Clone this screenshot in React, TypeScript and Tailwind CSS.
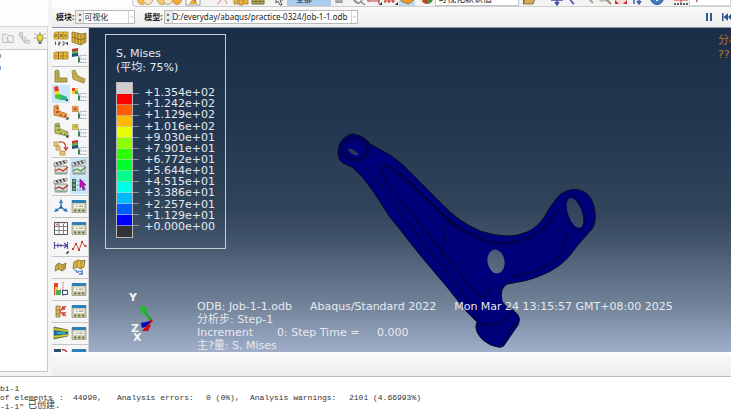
import React from 'react';
import type { ReactNode } from 'react';
import { ChevronDown } from 'lucide-react';
import clsx from 'clsx';

interface Tool {
  name: string;
  icon: ReactNode;
  active?: boolean;
}

const legendColors = [
  'bg-[#cfcdce]', 'bg-[#fb0000]', 'bg-[#ff5d00]', 'bg-[#ffb900]', 'bg-[#e8ff00]',
  'bg-[#8bff00]', 'bg-[#2eff00]', 'bg-[#00ff2e]', 'bg-[#00ff8b]', 'bg-[#00ffe8]',
  'bg-[#00b9ff]', 'bg-[#005dff]', 'bg-[#0000ff]', 'bg-[#333335]'
];

const legendValues = [
  '+1.354e+02', '+1.242e+02', '+1.129e+02', '+1.016e+02', '+9.030e+01', '+7.901e+01', '+6.772e+01',
  '+5.644e+01', '+4.515e+01', '+3.386e+01', '+2.257e+01', '+1.129e+01', '+0.000e+00'
];

function Svg({ children, className = 'w-4 h-4' }: { children: ReactNode; className?: string }) {
  return (
    <svg viewBox="0 0 16 16" fill="none" className={clsx('shrink-0', className)} aria-hidden="true">
      {children}
    </svg>
  );
}

const blocks = (
  <Svg>
    <path d="M1 3l2-1h12v7H1z" fill="#ecc03f" stroke="#b08c2c" strokeWidth=".8" />
    <path d="M5.500 2v7M10 2v7" stroke="#8f7327" strokeWidth=".8" />
    <path d="M2 7l1-3 1 3M7 7l1-3 1 3M11.500 7l1-3 1 3" stroke="#7d6526" strokeWidth=".9" />
    <path d="M2.500 11.500v3.500M5.500 12h1.500v1.500H5.500V15H7M9.500 12H11v3H9.500M13 12v1.500h2M14.500 12v3" stroke="#444" strokeWidth=".9" />
  </Svg>
);

const blocksTilted = (
  <Svg>
    <path d="M1 2l10 2 4-1v9l-5 3-9-3z" fill="#dfb53d" stroke="#8c7127" strokeWidth=".8" />
    <path d="M1 7l9 3 5-2M4 3v9M7 3v11M10 4v11M13 3v10" stroke="#7d6526" strokeWidth=".8" />
  </Svg>
);

const blocksFlat = (
  <Svg>
    <path d="M1 5l2-1h12v7H1z" fill="#eeb634" stroke="#a57c22" strokeWidth=".8" />
    <path d="M5.500 4v7M10 4v7M2 8h2M7 8h2M12 8h2" stroke="#8a6a22" strokeWidth="1" />
  </Svg>
);

const tree = (
  <>
    <path d="M7.500 7v8M7.500 9h2M7.500 14h2" stroke="#7d9a83" strokeWidth="1" />
    <path d="M9.500 7.500h6M9.500 11h6M9.500 14.500h6" stroke="#7ba3d0" strokeWidth="1.200" strokeDasharray="1.500 .8" />
    <path d="M7 10h2v4H7z" fill="#3f7d53" />
  </>
);

const contourOptions = (
  <Svg>
    <path d="M1 1l6-1v7l-6 1z" fill="#cf2f2b" />
    <path d="M1 3.500l6-1v4.500l-6 1z" fill="#57b34a" />
    <path d="M1 6l6-1v3l-6 1z" fill="#234f8f" />
    {tree}
  </Svg>
);

const cubeOptions = (
  <Svg>
    <path d="M1 2h6v6H1z" fill="#ecd43c" />
    <path d="M1 2h3v3H1z" fill="#e2442b" />
    <path d="M4 5h3v3H4z" fill="#4cb64e" />
    {tree}
  </Svg>
);

const orangeOptions = (
  <Svg>
    <path d="M1.500 2.500h5.500v5H1.500z" fill="#f0a23a" stroke="#c9803f" strokeWidth=".8" />
    <path d="M3 4h2.500v2H3z" fill="#d53c20" />
    {tree}
  </Svg>
);

const yellowOptions = (
  <Svg>
    <path d="M1.500 2.500h5.500v5H1.500z" fill="#e7cb52" stroke="#bba14a" strokeWidth=".8" />
    <path d="M3 5l2-2 1 3z" fill="#71a553" />
    {tree}
  </Svg>
);

const lShape = (
  <Svg>
    <path d="M2 3l2-1 2 1v7h8v4H2z" fill="#c2b04f" stroke="#8f8140" strokeWidth=".9" />
    <path d="M2 6h4M2 9h4M5 10v4M8 10v4M11 10v4" stroke="#94843a" strokeWidth=".6" />
  </Svg>
);

const lBent = (
  <Svg>
    <path d="M1 3l3-1 2 5 3 2 5 2-1 4-6-2-5-2z" fill="#c9b453" stroke="#988844" strokeWidth=".9" />
    <path d="M2 6l4-1M4 9l3-1M8 9l-1 4M11 10l-1 4" stroke="#94843a" strokeWidth=".6" />
  </Svg>
);

const contourPlot = (
  <Svg>
    <path d="M1 1l4-1 1 6-4 2z" fill="#e8321f" />
    <path d="M1.500 5h4.500v4l-4 2z" fill="#f3d62b" />
    <path d="M2 9l5-1 3 2-2 4-6-2z" fill="#3ec43e" />
    <path d="M9 9l5 2v3l-6 0z" fill="#2fae8a" />
    <path d="M12 15h3v-2z" fill="#222" />
  </Svg>
);

const symbolPlot = (
  <Svg>
    <path d="M1 2l4-1 1 6 8 3-1 4-8-2-4-1z" fill="#e2a047" stroke="#b4793c" strokeWidth=".9" />
    <path d="M3 4h2M3 8h3M7 11h2M11 12h2" stroke="#c8341f" strokeWidth="1.600" />
    <path d="M12.500 15.500h3v-3z" fill="#222" />
  </Svg>
);

const materialPlot = (
  <Svg>
    <path d="M2 2l4-1 1 6 8 3-1 4-8-2-4-1z" fill="#cdc15a" stroke="#7e8748" strokeWidth=".9" />
    <path d="M3 4h3M4 8h3M7 11h2M11 12h2" stroke="#3f9a5a" strokeWidth="1.600" />
    <path d="M12.500 15.500h3v-3z" fill="#222" />
  </Svg>
);

const transformBlocks = (
  <Svg>
    <path d="M1 2h4v4H1zM3 6h4v4H3zM7 11h5v4H7z" fill="#efc66a" stroke="#b79650" strokeWidth=".9" />
    <path d="M6 2c5-1 7 2 7 7M11 7l2 3 2-3" stroke="#c93c33" strokeWidth="1.300" />
  </Svg>
);

function Clapper({ stroke }: { stroke: string }) {
  return (
    <Svg>
      <path d="M1 4l13-3v3L1 7z" fill="#e8e8e8" stroke="#777" strokeWidth=".7" />
      <path d="M3 3.500l2 2M6.500 2.800l2 2M10 2l2 2" stroke="#333" strokeWidth="1.400" />
      <path d="M2 7h12v8H2z" fill="#dde1dc" stroke="#888" strokeWidth=".9" />
      <path d="M2 12l4-2 4 2 5-4" stroke={stroke} strokeWidth="1.300" />
      <path d="M3 14h10" stroke="#6a9a6e" strokeWidth="1" />
    </Svg>
  );
}

const clapperOptions = (
  <Svg>
    <path d="M1 2h4v12H1z" fill="#3f6b4a" />
    <path d="M2 4h2M2 8h2M2 12h2" stroke="#d3e1d3" strokeWidth="1.200" />
    <path d="M6 4h8M6 8h8M6 13h9" stroke="#5f8fc4" strokeWidth="1.200" strokeDasharray="1.500 .8" />
    <path d="M9 2l6 6-2.500 0 1.500 4-2 1-1-4-2 2z" fill="#cc0fb4" stroke="#7a0b72" strokeWidth=".6" />
  </Svg>
);

const csys = (
  <Svg>
    <path d="M8 9V4M8 9l-4 3M8 9l4 3" stroke="#2d7cc7" strokeWidth="1.400" />
    <path d="M6 5l2-4 2 4zM1 14l2-4 3 3zM15 14l-2-4-3 3z" fill="#2d7cc7" />
    <circle cx="8" cy="9.500" r="1.300" fill="#1d5291" />
  </Svg>
);

const dialog = (
  <Svg>
    <path d="M1 2.500h14v12H1z" fill="#d3d0b4" stroke="#9a9a86" strokeWidth=".8" />
    <path d="M1 2h14v3H1z" fill="#2f80ba" />
    <path d="M3 6.500h10v3.500H3z" fill="#f3f3ec" />
    <path d="M5 8.200h1.500M8 8.200h4" stroke="#8c8c8c" strokeWidth="1" />
    <path d="M3 11.500h2.500v2H3zM7 11.500h2.500v2H7zM11 11.500h2.500v2H11z" fill="#6d754c" />
  </Svg>
);

const xyTable = (
  <Svg>
    <path d="M1.500 2.500h13v12h-13z" fill="#fff" stroke="#555" />
    <path d="M1.500 6.500h13M1.500 10.500h13M6 2.500v12M10.500 6.500v8" stroke="#777" strokeWidth=".9" />
    <path d="M3 3.500l2 2M5 3.500l-2 2M9.500 3.500l1 1 1-1M10.500 4.500v1.500" stroke="#c7382e" />
  </Svg>
);

const pathTool = (
  <Svg>
    <path d="M1.500 4v7M14.500 4v7M2 7.500h12M11 5l3 2.500-3 2.500M5 5.500v4M8 6v3" stroke="#5c4c9c" strokeWidth="1.200" />
    <path d="M12.500 15.500h3v-3z" fill="#222" />
  </Svg>
);

const xyCurve = (
  <Svg>
    <path d="M2 11l3-5 3 6 3-8 4 5" stroke="#dd4b39" strokeWidth="1" />
    <path d="M1 10h2v2H1zM4 5h2v2H4zM7 11h2v2H7zM10 3h2v2h-2zM13.500 7h2v2h-2z" fill="#d5382a" />
  </Svg>
);

const cutPart = (
  <Svg>
    <path d="M3 6l3-2 3 2 4-2-1 6-3 2-3-2-4 2z" fill="#d2b548" stroke="#8a7430" strokeWidth=".9" />
    <path d="M5.500 5v5M9 6v5M11 5v5" stroke="#8a7430" strokeWidth=".7" />
  </Svg>
);

const cutOptions = (
  <Svg>
    <path d="M3 3l4-2 4 1 3-1-1 7-3 2-4-2-4 2z" fill="#dcb846" stroke="#8a7430" strokeWidth=".9" />
    <path d="M6 2v6M10 2v7" stroke="#8a7430" strokeWidth=".7" />
    <path d="M3 11l3 1M5 13l3 0M8 12l3 1M8 15h4M11 11v4" stroke="#4a7fc4" strokeWidth="1.300" />
  </Svg>
);

const viewCut = (
  <Svg>
    <path d="M1 2h4v12H1z" fill="#e2442b" />
    <path d="M2 6h3v8H2z" fill="#f0cf34" />
    <path d="M3 9h5v5H3z" fill="#44b751" />
    <path d="M10 1v14M7 9h8" stroke="#c7382e" strokeWidth=".8" strokeDasharray="1.500 1" />
    <path d="M9.500 9.500h5v4h-5z" fill="#fff" stroke="#344a7c" strokeWidth="1" />
  </Svg>
);

const freeBody = (
  <Svg>
    <path d="M3 3h4v11H3z" fill="#d6bb56" stroke="#8a7430" strokeWidth=".8" />
    <path d="M3 7h4M3 11h4" stroke="#8a7430" strokeWidth=".7" />
    <path d="M7 8l6-5M7 9l6 4M10 3l-1 3 3 0M10 13l0-3 3 0" stroke="#d5382a" strokeWidth="1.300" />
  </Svg>
);

const stream = (
  <Svg>
    <path d="M1 2l14 3v6L1 14z" fill="#48a83c" stroke="#3c5223" strokeWidth=".6" />
    <path d="M1 4l14 2M1 12l14-2" stroke="#e9bd2f" strokeWidth="1.600" />
    <path d="M1 6h6l3 1 5 0v2l-5 0-3 1H1z" fill="#235ea8" />
    <path d="M4 8h8" stroke="#37cbd0" strokeWidth="1.400" />
  </Svg>
);

const imageTool = (
  <Svg>
    <path d="M1 2h7v6H1z" fill="#29506e" />
    <path d="M9 3c4-1 5 2 5 5" stroke="#c7382e" strokeWidth="1.500" />
  </Svg>
);

const toolGroups: { className: string; tools: Tool[] }[] = [
  {
    className: 'py-px',
    tools: [
      { name: 'Frame numbers', icon: blocks },
      { name: 'Field output', icon: blocksTilted },
      { name: 'Step frames', icon: blocksFlat },
      { name: 'Common options', icon: contourOptions }
    ]
  },
  {
    className: '',
    tools: [
      { name: 'Undeformed shape', icon: lShape },
      { name: 'Deformed shape', icon: lBent },
      { name: 'Contours', icon: contourPlot, active: true },
      { name: 'Contour options', icon: cubeOptions },
      { name: 'Symbols', icon: symbolPlot },
      { name: 'Symbol options', icon: orangeOptions },
      { name: 'Material orientations', icon: materialPlot },
      { name: 'Orientation options', icon: yellowOptions },
      { name: 'Overlay plot', icon: transformBlocks },
      { name: 'Superimpose options', icon: contourOptions }
    ]
  },
  {
    className: 'pb-px',
    tools: [
      { name: 'Animate scale factor', icon: <Clapper stroke="#c7382e" /> },
      { name: 'Animate time history', icon: <Clapper stroke="#3f9a4e" />, active: true },
      { name: 'Animate harmonic', icon: <Clapper stroke="#a8332c" /> },
      { name: 'Animation options', icon: clapperOptions, active: true }
    ]
  },
  { className: 'pt-px pb-0.5', tools: [{ name: 'Coordinate system', icon: csys }, { name: 'Coordinate manager', icon: dialog }] },
  {
    className: 'py-px',
    tools: [
      { name: 'XY data', icon: xyTable },
      { name: 'XY data manager', icon: dialog },
      { name: 'Path', icon: pathTool },
      { name: 'XY options', icon: xyCurve }
    ]
  },
  { className: 'pt-px pb-0.5', tools: [{ name: 'Ply stack', icon: cutPart }, { name: 'Ply options', icon: cutOptions }] },
  { className: 'pt-px pb-0.5', tools: [{ name: 'View cut', icon: viewCut }, { name: 'View cut manager', icon: dialog }] },
  { className: 'pt-px pb-0.5', tools: [{ name: 'Free body', icon: freeBody }, { name: 'Free body manager', icon: dialog }] },
  { className: 'pt-px pb-0.5', tools: [{ name: 'Stream', icon: stream }, { name: 'Stream manager', icon: dialog }] },
  { className: 'pt-px', tools: [{ name: 'Image', icon: imageTool }, { name: 'Image manager', icon: dialog }] }
];

function StripButton({ name, className, children }: { name: string; className?: string; children: ReactNode }) {
  return (
    <button type="button" aria-label={name} className={clsx('shrink-0', className)}>
      <Svg className="w-4 h-4 block">{children}</Svg>
    </button>
  );
}

function TopToolbar() {
  return (
    <div className="ml-20 h-[7px] shrink-0 flex items-end overflow-hidden border-b border-l border-[#cfcfcf] rounded-bl bg-[#f3f3f3] pl-1">
      <StripButton name="Union">
        <circle cx="5" cy="10" r="4.500" fill="#f5b94a" stroke="#b9a57f" />
        <circle cx="11" cy="10" r="4.500" fill="#fbe6bc" stroke="#b9a57f" />
      </StripButton>
      <StripButton name="Intersect" className="ml-1">
        <circle cx="5" cy="10" r="4.500" fill="#f7c467" stroke="#b5a27c" />
        <circle cx="11" cy="10" r="4.500" fill="#f3e7ce" stroke="#b5a27c" />
      </StripButton>
      <StripButton name="Replace" className="-ml-1">
        <circle cx="8" cy="10" r="4.500" fill="#f5a93a" stroke="#c59655" />
      </StripButton>
      <StripButton name="Pick">
        <path d="M1 0h14v15H1z" fill="#fff" stroke="#9a9a9a" />
        <path d="M4 14l4-6 5 6z" fill="#e4a93f" />
        <path d="M6 4l5 8" stroke="#444" />
      </StripButton>
      <StripButton name="Undo" className="ml-3">
        <path d="M6 5c4 3 2 7-2 9M15 5c-4 3-3 6-1 9" stroke="#dc9c98" strokeWidth="1.200" />
      </StripButton>
      <StripButton name="Cells" className="ml-1">
        <path d="M1 6l4-2v10H1zM6 8h4v7H6zM11 5h4v9h-4z" fill="#edb239" stroke="#a57c22" strokeWidth=".8" />
      </StripButton>
      <StripButton name="Mesh" className="ml-0.5">
        <path d="M1 5h12v9H1z" fill="#b9b15a" stroke="#736c33" />
        <path d="M1 11.500h12M5 5v9M9 5v9" stroke="#736c33" strokeWidth=".8" />
      </StripButton>
      <StripButton name="Select" className="ml-1">
        <path d="M5 1l7 9-3 0 2 5-2 0-2-4-2 2z" fill="#fff" stroke="#555" />
      </StripButton>
      <select aria-label="Selection filter" className="w-11 h-3.5 shrink-0 appearance-none border border-[#b8c8d8] bg-[#a9cdf0] pl-2 text-[8px] leading-3 text-[#222]">
        <option>全部</option>
      </select>
      <StripButton name="Filter">
        <path d="M4 4h8v9H4z" fill="#b3b3b3" />
        <path d="M5 12h6" stroke="#888" />
      </StripButton>
      <StripButton name="Measure" className="ml-1">
        <circle cx="7" cy="9" r="4" stroke="#999" strokeWidth="1.500" />
        <path d="M9 11l5 4M2 9l6 5" stroke="#888" strokeWidth="1.300" />
      </StripButton>
      <StripButton name="Drag box">
        <path d="M1 4v7h11V4M12 11v3" stroke="#b53d36" strokeWidth="1.200" />
        <path d="M12 15h3v-3z" fill="#222" />
      </StripButton>
      <StripButton name="Drag grid">
        <path d="M2 4v9M6 4v9M10 4v9M2 11h10" stroke="#c7382e" strokeWidth="1.200" />
        <path d="M12 15h3v-3z" fill="#222" />
      </StripButton>
      <StripButton name="Render" className="bg-[#bcdcf4]">
        <path d="M2 6l7-2 5 4v3l-5 3-7-3z" fill="#ee9a2c" stroke="#9d6a25" strokeWidth=".8" />
      </StripButton>
      <StripButton name="Color code" className="ml-1">
        <circle cx="8" cy="8" r="6" fill="#e9a83c" />
        <path d="M8 8h6a6 6 0 0 1-6 6z" fill="#4e8d3d" />
        <path d="M8 8v6a6 6 0 0 1-5-3z" fill="#a8482f" />
      </StripButton>
      <select aria-label="Color mapping" className="w-[84px] h-3.5 shrink-0 appearance-none border border-[#c4c4c4] bg-white pl-0.5 text-[9px] leading-3 text-[#222]">
        <option>可视化默认值</option>
      </select>
      <StripButton name="Open" className="ml-0.5">
        <path d="M2 4h10v10H2z" fill="#8e713a" />
        <path d="M2 14l3-7h10l-3 7z" fill="#d7aa57" stroke="#80632c" strokeWidth=".8" />
      </StripButton>
      <StripButton name="Pan" className="ml-3">
        <path d="M8 1v13M2 10h12M6 12l2 3 2-3" stroke="#4747ad" strokeWidth="1.400" />
      </StripButton>
      <StripButton name="Rotate">
        <path d="M9 2c-6 3-5 8 0 12" stroke="#6749b6" strokeWidth="1.800" />
      </StripButton>
      <StripButton name="Zoom">
        <path d="M6 7l6 6" stroke="#bca57c" strokeWidth="2" />
      </StripButton>
      <StripButton name="Box zoom">
        <path d="M3 5h6v6H3z" fill="#ddd" stroke="#aaa" />
        <path d="M9 9l5 5" stroke="#a58c60" strokeWidth="2" />
      </StripButton>
      <StripButton name="Fit">
        <path d="M2 3h12v11H2z" fill="#f3dcd8" />
        <path d="M2 14v-4l4 4zM14 14v-4l-4 4zM6 10h4V7H6z" fill="#cf2f2b" />
      </StripButton>
      <StripButton name="Cycle views">
        <path d="M5 3v11M10 3v11M8 11l2 3 2-3" stroke="#4a57a5" strokeWidth="1.500" />
      </StripButton>
      <StripButton name="Info" className="ml-1">
        <circle cx="8" cy="8" r="6.500" fill="#3e7dc2" stroke="#2d5c96" />
        <path d="M8 6v5" stroke="#fff" strokeWidth="2" />
      </StripButton>
      <StripButton name="Query" className="ml-2">
        <path d="M1 10h14M8 3v10" stroke="#c7382e" />
        <path d="M1 14h14" stroke="#333" strokeWidth="1.500" strokeDasharray="2 1" />
      </StripButton>
      <select aria-label="View" className="min-w-10 h-3.5 flex-1 appearance-none border border-[#d4d4d4] bg-white pl-1 text-[9px] leading-3">
        <option>1</option>
      </select>
    </div>
  );
}

function Spinner() {
  return (
    <span className="flex w-2 shrink-0 items-center justify-center border-r border-[#c8c8c8] bg-[#ececec]">
      <svg viewBox="0 0 6 12" className="h-3 w-1.5" fill="#333" aria-hidden="true">
        <path d="M1.500 4.500L3 2.500l1.500 2zM1.500 8.500L3 10.500l1.500-2z" />
      </svg>
    </span>
  );
}

function ContextField({ id, label, value, className }: { id: string; label: string; value: string; className: string }) {
  return (
    <div className="flex items-center gap-px">
      <label htmlFor={id} className="text-[8px] font-bold text-[#222]">{label}</label>
      <div className={clsx('flex h-3.5 border border-[#b9b9b9] bg-white', className)}>
        <Spinner />
        <select id={id} className="min-w-0 flex-1 appearance-none bg-white text-[8px] leading-3 text-[#222]">
          <option>{value}</option>
        </select>
        <span className="flex w-1.5 shrink-0 items-center justify-center border-l border-[#d4d4d4]">
          <ChevronDown className="h-1.5 w-1.5 text-[#777]" />
        </span>
      </div>
    </div>
  );
}

function ContextBar() {
  return (
    <div className="flex h-5 shrink-0 items-center gap-[9px] bg-gradient-to-b from-[#fafafa] to-[#ededed] pl-1">
      <ContextField id="module" label="模块:" value="可视化" className="w-[60px]" />
      <ContextField id="model" label="模型:" value="D:/everyday/abaqus/practice-0324/Job-1-1.odb" className="w-[194px]" />
      <div className="ml-auto flex items-center gap-2.5">
        <button type="button" aria-label="Pause">
          <svg viewBox="0 0 6 8" className="h-2 w-1.5" fill="#2f5790"><path d="M0 0h2v8H0zM4 0h2v8H4z" /></svg>
        </button>
        <button type="button" aria-label="First frame">
          <svg viewBox="0 0 9 8" className="h-2 w-[9px]" fill="#2f5790"><path d="M0 0h1.500v8H0zM6 0v8L1.500 4zM9 1v6L6 4z" /></svg>
        </button>
      </div>
    </div>
  );
}

function ModelTree() {
  return (
    <aside className="mr-1 flex w-12 shrink-0 flex-col border-b border-[#c9c9c9] bg-[#fdfdfd] mb-1">
      <div className="h-[26px] shrink-0" />
      <div className="flex h-[23px] shrink-0 items-center gap-1 border-t border-r border-[#d9d9d9] bg-[#f3f3f3] pl-0.5">
        <button type="button" aria-label="Parent folder">
          <Svg className="w-3 h-3">
            <path d="M1 3h5l2 2h7v9H1z" stroke="#b9b9b9" strokeWidth="1.300" />
            <path d="M5 9l2-2 2 2M7 7v5h4" stroke="#b9b9b9" strokeWidth="1.200" />
          </Svg>
        </button>
        <button type="button" aria-label="Expand">
          <Svg className="w-3 h-3">
            <path d="M2 1h4v4H2zM6 7h4v4H6zM11 11h4v4h-4zM4 5v4h2M8 11v3h3" stroke="#b3b3b3" strokeWidth="1.200" />
          </Svg>
        </button>
        <button type="button" aria-label="Tips">
          <Svg className="w-3 h-3">
            <path d="M8 0v2M1 2l2 2M15 2l-2 2M0 8h2M14 8h2" stroke="#929252" strokeWidth="1.300" />
            <path d="M8 3a4.500 4.500 0 0 1 3 7.500V12H5v-1.500A4.500 4.500 0 0 1 8 3z" fill="#e5da45" stroke="#66662d" strokeWidth=".9" />
            <path d="M6 13h4v2.500H6z" fill="#28566b" />
          </Svg>
        </button>
      </div>
      <div className="flex flex-1 flex-col gap-2 border-t border-r border-[#c9c9c9] bg-white pt-1">
        <span className="h-1 w-px bg-[#7fa3c8]" />
        <span className="h-1 w-px bg-[#7fa3c8]" />
      </div>
    </aside>
  );
}

function Toolbox() {
  return (
    <nav className="w-[37px] shrink-0 overflow-hidden border-r border-[#d2d2d2] bg-[#f6f6f6]">
      {toolGroups.map((group, i) => (
        <div key={i} className={clsx('grid grid-cols-2 border-b border-[#c4c4c4]', group.className)}>
          {group.tools.map((tool) => (
            <button
              key={tool.name}
              type="button"
              aria-label={tool.name}
              className={clsx('flex h-[18px] items-center justify-center', tool.active && 'bg-[#cbe5f9]')}
            >
              {tool.icon}
            </button>
          ))}
        </div>
      ))}
    </nav>
  );
}

function Legend() {
  return (
    <div className="w-[121px] border border-[#c3cbd4] px-2.5 pt-3 pb-2.5 text-[11px] leading-[14px]">
      <p>S, Mises</p>
      <p>(平均: 75%)</p>
      <div className="mt-[7px] flex">
        <div className="flex h-[156px] w-[18px] flex-col border border-[#b8b8b8]">
          {legendColors.map((color) => (
            <div key={color} className={clsx('relative flex-1', color)}>
              {color !== 'bg-[#333335]' && <span className="absolute bottom-0 left-0 h-px w-[22px] bg-[#c5ccd4]/60" />}
            </div>
          ))}
        </div>
        <div className="mt-[5px] ml-[11px] flex h-[145px] flex-col">
          {legendValues.map((value) => (
            <span key={value} className="flex flex-1 items-center leading-none">{value}</span>
          ))}
        </div>
      </div>
    </div>
  );
}

function ControlArm() {
  return (
    <svg viewBox="337 133 260 216" className="absolute top-[105px] left-[248px] h-[216px] w-[260px]" aria-label="Control arm">
      <defs>
        <pattern id="mesh" width="5" height="4" patternUnits="userSpaceOnUse" patternTransform="rotate(24)">
          <rect width="5" height="4" fill="#000094" />
          <path d="M0 0l2.500 2L5 0M0 4l2.500-2L5 4M0 2h2" stroke="#00003f" strokeWidth=".6" fill="none" />
        </pattern>
        <mask id="holes">
          <rect x="330" y="125" width="280" height="230" fill="#fff" />
          <path d="M348 149q4-1 7 2 4 3 4 4-5 1-8-2-3-2-3-4z" fill="#000" />
          <ellipse cx="575" cy="213" rx="7" ry="15.500" transform="rotate(-19 575 213)" fill="#000" />
          <ellipse cx="496" cy="261.500" rx="8.500" ry="12" transform="rotate(-10 496 261.500)" fill="#000" />
        </mask>
      </defs>
      <g mask="url(#holes)">
        <path
          d="M353 134C344 135 338 144 338 152Q338 161 345 164L352 167C359 173 363 178 367 183C376 194 382 206 390 217L420 255L447 287L467 312L477 322C474 329 478 335 483 340Q490 346 498 347Q503 348 505 344L518 325Q521 319 518 315L513 310Q507 309 502 301Q499 289 507 284C518 282 527 281 537 277Q551 272 560 265Q569 258 577 246L592 229Q596 223 595 213Q594 201 588 195Q582 189 573 189.500Q562 191 557 198Q550 206 545 216Q537 228 527 232Q518 236 508 236Q494 236 480 231Q469 226 460 220Q449 212 440 202L413 175Q401 162 390 155L370 144Q365 136 353 134Z"
          fill="url(#mesh)"
          stroke="#060626"
          strokeWidth="1"
        />
        <g fill="none" stroke="#00002d" strokeOpacity=".45">
          <ellipse cx="355" cy="149" rx="13" ry="11" strokeWidth="4" />
          <path d="M381 170Q383 164 390 166L436 208Q461 233 482 240Q505 248 528 238Q545 230 557 212" strokeWidth="3" />
          <path d="M381 170Q384 180 400 199L443 252L477 294Q488 302 491 286" strokeWidth="2" />
          <path d="M363 166Q380 181 397 209L472 304L481 325" strokeWidth="1.500" />
          <path d="M400 172L442 214Q464 233 487 238" strokeWidth="1.500" />
          <path d="M446 222L442 259M447 221L459 228" strokeWidth="1.500" />
          <ellipse cx="575" cy="213" rx="9" ry="18" transform="rotate(-19 575 213)" strokeWidth="2" />
          <path d="M477 323Q489 327 501 323L514 311M502 343L514 324" strokeWidth="2" />
          <path d="M512 276Q541 273 559 256Q567 247 566 232" strokeWidth="2" />
        </g>
      </g>
    </svg>
  );
}

function Triad() {
  return (
    <svg viewBox="0 0 28 52" className="absolute bottom-2 left-10 h-[52px] w-7" aria-label="View triad">
      <path d="M22 28l-7-9" stroke="#12b51d" strokeWidth="2.500" />
      <path d="M11 13l8 4-6 5z" fill="#15c41d" />
      <path d="M23 28l-5 5" stroke="#c40d16" strokeWidth="2.500" />
      <path d="M21 29l-9 2 1 5 6-2z" fill="#0808b5" />
      <path d="M19 32l-6 7 6 0 3-6z" fill="#cf0c15" />
      <g fill="#f2f4f7" className="text-[11px] font-bold">
        <text x="0" y="9">Y</text>
        <text x="2" y="40">Z</text>
        <text x="4" y="49">X</text>
      </g>
    </svg>
  );
}

function Viewport() {
  return (
    <main className="relative flex min-w-0 flex-1 flex-col items-start overflow-hidden bg-[linear-gradient(to_bottom,#1b2e48_0%,#22364f_28%,#30445a_56%,#40536a_65%,#5a6b81_75%,#73849a_86%,#a0aec9_100%)] pt-1.5 pl-4 font-['DejaVu_Sans','Noto_Sans_CJK_SC',sans-serif] text-[#e6e9ee]">
      <Legend />
      <ControlArm />
      <Triad />
      <p className="absolute top-1.5 left-[629px] text-[11px] leading-[14px] whitespace-nowrap text-[#b8742f]">
        分析<br />??
      </p>
      <div className="relative mt-auto ml-[92px] text-[11px] leading-[13px] whitespace-nowrap">
        <p className="flex gap-[18px]">
          <span>ODB: Job-1-1.odb</span>
          <span>Abaqus/Standard 2022</span>
          <span>Mon Mar 24 13:15:57 GMT+08:00 2025</span>
        </p>
        <p>分析步: Step-1</p>
        <p className="flex">
          <span className="w-20">Increment</span>
          <span className="w-[100px]">0: Step Time =</span>
          <span>0.000</span>
        </p>
        <p>主?量: S, Mises</p>
      </div>
    </main>
  );
}

function MessageArea() {
  return (
    <footer className="h-[33px] shrink-0 overflow-hidden border-t border-[#bdbdbd] bg-white pt-[7px] font-['Liberation_Mono','Noto_Sans_CJK_SC',monospace] text-[8px] leading-[9px] whitespace-nowrap text-[#333]">
      <p>bi-1</p>
      <p className="flex">
        <span className="w-[59px]">of elements</span>
        <span className="w-3.5">:</span>
        <span className="w-11">44990,</span>
        <span className="w-[89px]">Analysis errors:</span>
        <span className="w-11">0 (0%),</span>
        <span className="w-[99px]">Analysis warnings:</span>
        <span>2101 (4.66993%)</span>
      </p>
      <p className="flex gap-1">
        <span>-1-1&quot;</span>
        <span className="text-[9px]">已创建.</span>
      </p>
    </footer>
  );
}

export default function App() {
  return (
    <div className="flex h-screen flex-col overflow-hidden bg-[#f4f4f4] font-['Noto_Sans','Noto_Sans_CJK_SC',sans-serif]">
      <div className="flex min-h-0 flex-1">
        <ModelTree />
        <div className="flex min-w-0 flex-1 flex-col">
          <div className="shrink-0 bg-[#fdfdfd]">
            <TopToolbar />
          </div>
          <ContextBar />
          <div className="flex min-h-0 flex-1 border-t border-[#8b95a3]">
            <Toolbox />
            <Viewport />
          </div>
          <div className="h-6 shrink-0 border-t border-white bg-gradient-to-b from-[#fafafa] to-[#ececec]" />
        </div>
      </div>
      <MessageArea />
    </div>
  );
}
